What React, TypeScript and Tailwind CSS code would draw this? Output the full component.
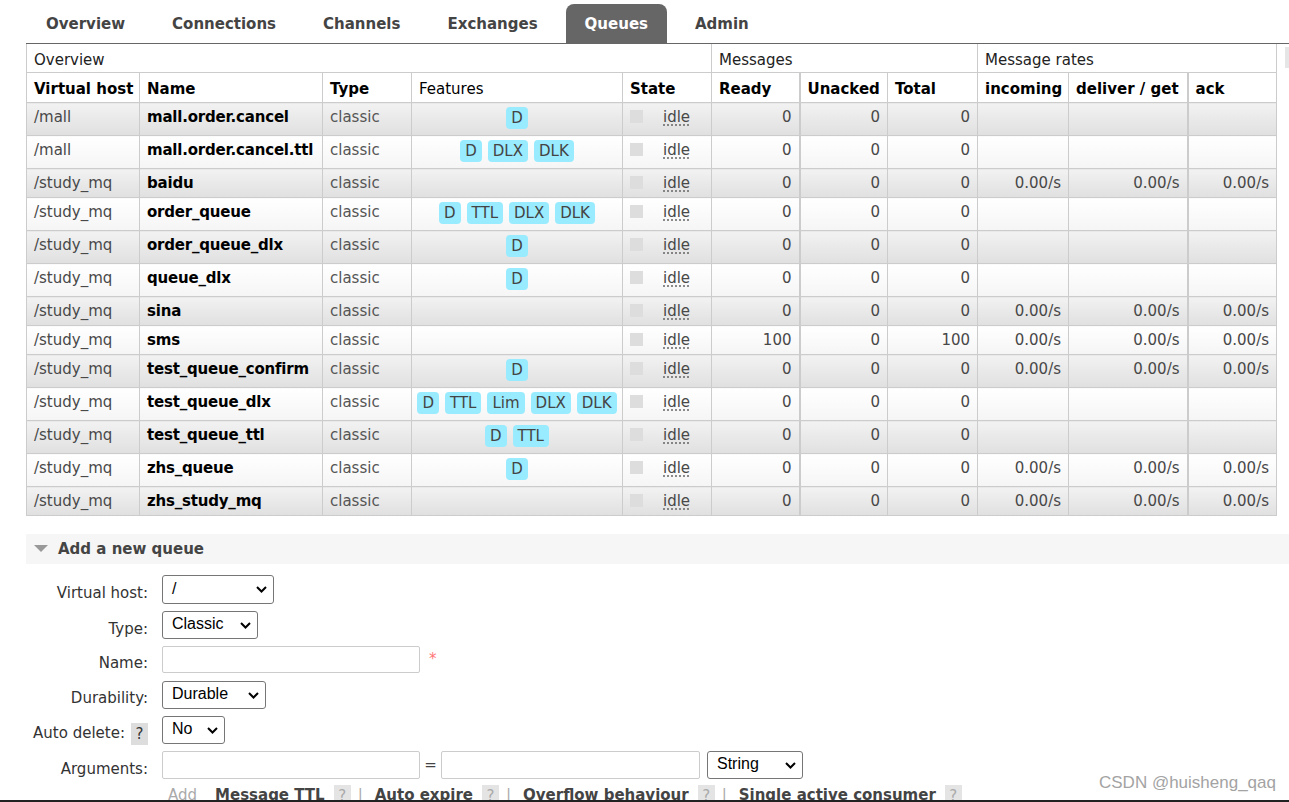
import React from "react";

type Row = {
  vh: string;
  name: string;
  features: string[];
  ready: string;
  unacked: string;
  total: string;
  rates: boolean;
};

const rows: Row[] = [
  { vh: "/mall", name: "mall.order.cancel", features: ["D"], ready: "0", unacked: "0", total: "0", rates: false },
  { vh: "/mall", name: "mall.order.cancel.ttl", features: ["D", "DLX", "DLK"], ready: "0", unacked: "0", total: "0", rates: false },
  { vh: "/study_mq", name: "baidu", features: [], ready: "0", unacked: "0", total: "0", rates: true },
  { vh: "/study_mq", name: "order_queue", features: ["D", "TTL", "DLX", "DLK"], ready: "0", unacked: "0", total: "0", rates: false },
  { vh: "/study_mq", name: "order_queue_dlx", features: ["D"], ready: "0", unacked: "0", total: "0", rates: false },
  { vh: "/study_mq", name: "queue_dlx", features: ["D"], ready: "0", unacked: "0", total: "0", rates: false },
  { vh: "/study_mq", name: "sina", features: [], ready: "0", unacked: "0", total: "0", rates: true },
  { vh: "/study_mq", name: "sms", features: [], ready: "100", unacked: "0", total: "100", rates: true },
  { vh: "/study_mq", name: "test_queue_confirm", features: ["D"], ready: "0", unacked: "0", total: "0", rates: true },
  { vh: "/study_mq", name: "test_queue_dlx", features: ["D", "TTL", "Lim", "DLX", "DLK"], ready: "0", unacked: "0", total: "0", rates: false },
  { vh: "/study_mq", name: "test_queue_ttl", features: ["D", "TTL"], ready: "0", unacked: "0", total: "0", rates: false },
  { vh: "/study_mq", name: "zhs_queue", features: ["D"], ready: "0", unacked: "0", total: "0", rates: true },
  { vh: "/study_mq", name: "zhs_study_mq", features: [], ready: "0", unacked: "0", total: "0", rates: true },
];

const tabs = ["Overview", "Connections", "Channels", "Exchanges", "Queues", "Admin"];

function Chevron() {
  return (
    <svg width="11" height="7" viewBox="0 0 11 7" className="shrink-0">
      <path d="M1 1l4.5 4.5L10 1" fill="none" stroke="#000" strokeWidth="2" />
    </svg>
  );
}

function Select({ value, className }: { value: string; className: string }) {
  return (
    <div
      className={`flex h-[28px] items-center justify-between rounded-[3px] border border-[#767676] bg-white pl-[9px] pr-[6px] font-['Liberation_Sans',sans-serif] text-[16px] text-black ${className}`}
    >
      <span className="-mt-[2px]">{value}</span>
      <Chevron />
    </div>
  );
}

function Label({ children }: { children: React.ReactNode }) {
  return <div className="w-[122px] pt-[8px] text-right leading-[20px] text-[#333]">{children}</div>;
}

export default function App() {
  const cell = "border-b border-r border-[#ccc] px-[7px] pt-[4px] pb-[4px] align-top whitespace-nowrap";
  const head = "border-b border-r border-[#ccc] px-[7px] pt-[6px] align-top whitespace-nowrap text-left";

  return (
    <div className="relative h-[802px] w-[1289px] overflow-hidden bg-white pl-[26px] font-['DejaVu_Sans',sans-serif] text-[15px]">
      {/* Tabs */}
      <div className="flex gap-[9px] border-b border-[#666] pl-[1px] pt-[4px]">
        {tabs.map((t) => (
          <div
            key={t}
            className={`flex h-[39px] items-center rounded-t-[8px] px-[19px] pt-[2px] font-bold ${
              t === "Queues" ? "bg-[#666] text-white" : "text-[#444]"
            }`}
          >
            {t}
          </div>
        ))}
      </div>

      {/* Queue table */}
      <div className="flex items-start">
        <table className="w-[1250px] table-fixed border-collapse border-l border-[#ccc] leading-[20px]">
          <colgroup>
            <col className="w-[113px]" />
            <col className="w-[183px]" />
            <col className="w-[89px]" />
            <col className="w-[211px]" />
            <col className="w-[89px]" />
            <col className="w-[88px]" />
            <col className="w-[88px]" />
            <col className="w-[90px]" />
            <col className="w-[91px]" />
            <col className="w-[119px]" />
            <col className="w-[89px]" />
          </colgroup>
          <thead>
            <tr className="text-[#222]">
              <th colSpan={5} className={`${head} pb-[2px] font-normal`}>Overview</th>
              <th colSpan={3} className={`${head} pb-[2px] font-normal`}>Messages</th>
              <th colSpan={3} className={`${head} pb-[2px] font-normal`}>Message rates</th>
            </tr>
            <tr className="text-black">
              <th className={`${head} pb-[3px] font-bold`}>Virtual host</th>
              <th className={`${head} pb-[3px] font-bold`}>Name</th>
              <th className={`${head} pb-[3px] font-bold`}>Type</th>
              <th className={`${head} pb-[3px] font-normal`}>Features</th>
              <th className={`${head} pb-[3px] font-bold`}>State</th>
              <th className={`${head} pb-[3px] font-bold`}>Ready</th>
              <th className={`${head} border-l-2 pb-[3px] font-bold`}>Unacked</th>
              <th className={`${head} pb-[3px] font-bold`}>Total</th>
              <th className={`${head} pb-[3px] font-bold`}>incoming</th>
              <th className={`${head} pb-[3px] font-bold`}>deliver / get</th>
              <th className={`${head} border-l-2 pb-[3px] font-bold`}>ack</th>
            </tr>
          </thead>
          <tbody>
            {rows.map((r, i) => {
              const bg =
                i % 2 === 0
                  ? "bg-linear-to-b from-[#f2f2f2] to-[#e0e0e0]"
                  : "bg-linear-to-b from-[#ffffff] to-[#f5f5f5]";
              const td = `${cell} ${bg}`;
              return (
                <tr key={r.name} className="text-[#484848]">
                  <td className={td}>{r.vh}</td>
                  <td className={`${td} font-bold tracking-[-0.2px] text-black`}>{r.name}</td>
                  <td className={`${td} text-[#555]`}>classic</td>
                  <td className={td}>
                    {r.features.length > 0 && (
                      <div className="flex h-[24px] items-start justify-center gap-[6px]">
                        {r.features.map((f) => (
                          <span key={f} className="h-[22px] rounded-[4px] bg-[#99ebff] px-[5px] leading-[22px] text-[#444]">
                            {f}
                          </span>
                        ))}
                      </div>
                    )}
                  </td>
                  <td className={td}>
                    <div className="flex items-start">
                      <span className="mt-[3px] h-[13px] w-[13px] bg-[#ddd]" />
                      <span className="ml-[20px] underline decoration-[#666] decoration-dotted underline-offset-[3px]">idle</span>
                    </div>
                  </td>
                  <td className={`${td} text-right`}>{r.ready}</td>
                  <td className={`${td} border-l-2 text-right`}>{r.unacked}</td>
                  <td className={`${td} text-right`}>{r.total}</td>
                  <td className={`${td} text-right`}>{r.rates ? "0.00/s" : ""}</td>
                  <td className={`${td} text-right`}>{r.rates ? "0.00/s" : ""}</td>
                  <td className={`${td} border-l-2 text-right`}>{r.rates ? "0.00/s" : ""}</td>
                </tr>
              );
            })}
          </tbody>
        </table>
        <div className="ml-[8px] mt-[3px] h-[21px] w-[12px] shrink-0 bg-[#e6e6e6]" />
      </div>

      {/* Add a new queue */}
      <div className="mt-[18px] flex h-[30px] items-center bg-[#f6f6f6] pl-[8px]">
        <svg width="14" height="8" viewBox="0 0 14 8">
          <path d="M0 0h14L7 7z" fill="#999" />
        </svg>
        <span className="ml-[10px] font-bold text-[#444]">Add a new queue</span>
      </div>

      <div className="mt-[11px] flex flex-col">
        <div className="flex items-start">
          <Label>Virtual host:</Label>
          <Select value="/" className="ml-[14px] h-[29px] w-[112px]" />
        </div>
        <div className="mt-[7px] flex items-start">
          <Label>Type:</Label>
          <Select value="Classic" className="ml-[14px] w-[96px]" />
        </div>
        <div className="mt-[7px] flex items-start">
          <div className="w-[122px] pt-[7px] text-right leading-[20px] text-[#333]">Name:</div>
          <div className="ml-[14px] h-[27px] w-[258px] rounded-[2px] border border-[#ccc] bg-white" />
          <span className="ml-[9px] mt-[3px] leading-[20px] text-[#f77]">*</span>
        </div>
        <div className="mt-[8px] flex items-start">
          <div className="w-[122px] pt-[7px] text-right leading-[20px] text-[#333]">Durability:</div>
          <Select value="Durable" className="ml-[14px] w-[104px]" />
        </div>
        <div className="mt-[7px] flex items-start">
          <div className="flex w-[122px] items-start justify-end gap-[6px] pt-[7px] leading-[20px] text-[#333]">
            <span>Auto delete:</span>
            <span className="h-[22px] w-[17px] bg-[#ddd] text-center leading-[22px] text-[#333]">?</span>
          </div>
          <Select value="No" className="ml-[14px] w-[63px]" />
        </div>
        <div className="mt-[6px] flex items-start">
          <Label>Arguments:</Label>
          <div className="ml-[14px] h-[28px] w-[258px] rounded-[2px] border border-[#ccc] bg-white" />
          <span className="w-[21px] pt-[4px] text-center leading-[20px] text-[#444]">=</span>
          <div className="h-[28px] w-[259px] rounded-[2px] border border-[#ccc] bg-white" />
          <Select value="String" className="ml-[7px] w-[96px]" />
        </div>
        <div className="ml-[142px] mt-[6px] flex items-start leading-[20px]">
          <span className="text-[#aaa]">Add</span>
          {["Message TTL", "Auto expire", "Overflow behaviour", "Single active consumer"].map((a, i) => (
            <div key={a} className={`flex items-start ${i === 0 ? "ml-[18px]" : "ml-[12px]"}`}>
              <span className="font-bold text-[#444]">{a}</span>
              <span className="ml-[9px] h-[22px] w-[17px] bg-[#e4e4e4] text-center leading-[22px] text-[#aaa]">?</span>
              {i < 3 && <span className="ml-[7px] text-[#aaa]">|</span>}
            </div>
          ))}
        </div>
      </div>

      {/* Watermark */}
      <div className="absolute left-[1099px] top-[772px] font-['Liberation_Sans',sans-serif] text-[17px] leading-[22px] text-[#a3a3a3]">
        CSDN @huisheng_qaq
      </div>
      <div className="absolute bottom-0 left-0 right-0 h-[2px] bg-[#222]" />
    </div>
  );
}
